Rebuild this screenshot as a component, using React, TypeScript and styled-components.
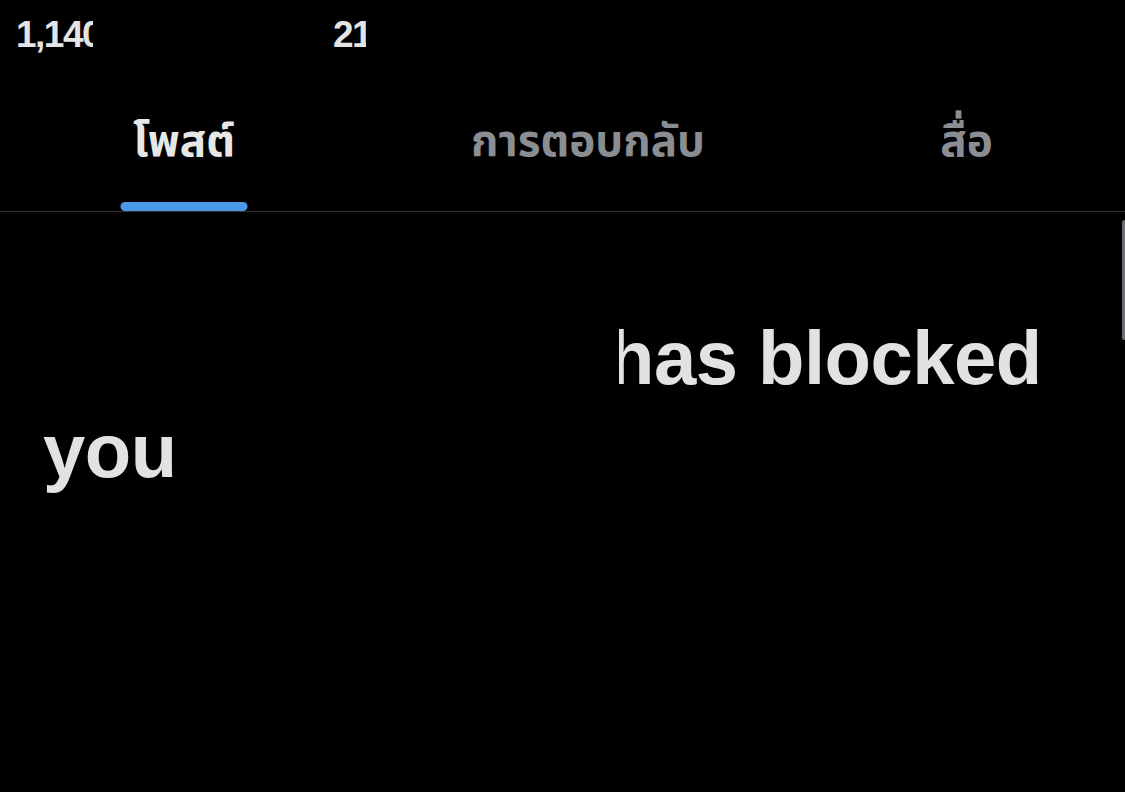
import React from 'react';
import styled, { createGlobalStyle } from 'styled-components';

const GlobalStyle = createGlobalStyle`
  html, body {
    margin: 0;
    padding: 0;
    background: #000;
  }
  #root {
    min-height: 792px;
  }
`;

const Screen = styled.div`
  width: 1125px;
  height: 792px;
  background: #000;
  color: #e7e7e7;
  font-family: "Liberation Sans", Arial, sans-serif;
  display: flex;
  flex-direction: column;
  position: relative;
  overflow: hidden;
`;

const StatsBar = styled.div`
  height: 70px;
  display: flex;
  align-items: flex-start;
  padding: 14px 0 0 16px;
  box-sizing: border-box;
`;

const Stat = styled.span<{ $clip: number; $offset: number }>`
  display: inline-block;
  width: ${p => p.$clip}px;
  margin-left: ${p => p.$offset}px;
  overflow: hidden;
  white-space: nowrap;
  font-size: 37px;
  font-weight: 700;
  letter-spacing: -1.5px;
  color: #e4e4e4;
`;

const Tabs = styled.nav`
  display: grid;
  grid-template-columns: 368px 440px 1fr;
  height: 141px;
  border-bottom: 1px solid #2f3133;
`;

const Tab = styled.div<{ $active?: boolean }>`
  position: relative;
  display: flex;
  justify-content: center;
  padding-top: 39px;
  font-family: "Noto Sans Thai", "Noto Sans", "DejaVu Sans", sans-serif;
  font-size: 44px;
  font-weight: 700;
  color: ${p => (p.$active ? '#e7e7e7' : '#8a8d91')};
`;

const Indicator = styled.span`
  position: absolute;
  bottom: 0;
  left: 50%;
  transform: translateX(-50%);
  width: 127px;
  height: 9px;
  border-radius: 5px;
  background: #4a98e8;
`;

const Body = styled.div`
  flex: 1;
  padding: 92px 0 0 43px;
`;

const Notice = styled.p`
  margin: 0;
  width: 1010px;
  font-size: 76px;
  font-weight: 700;
  letter-spacing: -0.5px;
  line-height: 93px;
  color: #e2e2e2;
`;

// Redacted account name in front of the notice
const Redacted = styled.span`
  display: inline-block;
  position: relative;
  z-index: 1;
  width: 576px;
  height: 80px;
  margin-right: -11px;
  background: #000;
  vertical-align: baseline;
`;

const ScrollThumb = styled.span`
  position: absolute;
  right: -2px;
  top: 220px;
  width: 5px;
  height: 120px;
  border-radius: 3px;
  background: #6d6f72;
`;

export default function App() {
  return (
    <>
      <GlobalStyle />
      <Screen>
        <StatsBar>
          <Stat $clip={77} $offset={0}>1,140</Stat>
          <Stat $clip={33} $offset={240}>21</Stat>
        </StatsBar>
        <Tabs>
          <Tab $active>
            โพสต์
            <Indicator />
          </Tab>
          <Tab>การตอบกลับ</Tab>
          <Tab>สื่อ</Tab>
        </Tabs>
        <Body>
          <Notice>
            <Redacted />
            has blocked you
          </Notice>
        </Body>
        <ScrollThumb />
      </Screen>
    </>
  );
}
